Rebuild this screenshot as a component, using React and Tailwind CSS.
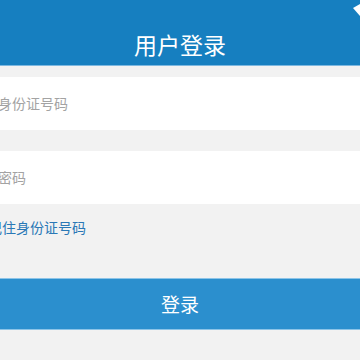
export default function App() {
  const font = { fontFamily: '"Noto Sans CJK SC", "Noto Sans", sans-serif' };
  return (
    <div className="w-[360px] h-[360px] overflow-hidden bg-[#f2f2f2] relative" style={font}>
      <div className="h-[66px] bg-[#167fc0] border-b border-[#7db8e0] flex items-end justify-center pb-[6px]">
        <span className="text-white text-[23px] leading-[30px]">用户登录</span>
      </div>
      <svg className="absolute right-0 top-[4px]" width="7" height="12" viewBox="0 0 7 12">
        <polygon points="7,0 0,4 7,12" fill="#ffffff" />
      </svg>
      <div className="h-[11px]" />
      <div className="h-[53px] bg-white flex items-center">
        <span className="ml-[-2px] text-[14px] text-[#a3a3a3]">身份证号码</span>
      </div>
      <div className="h-[21px]" />
      <div className="h-[53px] bg-white flex items-center">
        <span className="ml-[-2px] text-[14px] text-[#a3a3a3]">密码</span>
      </div>
      <div className="h-[46px] flex items-center">
        <span className="ml-[-12px] text-[14px] text-[#2a78b6]">记住身份证号码</span>
      </div>
      <div className="h-[28px]" />
      <div className="h-[52px] bg-[#2b8fce] border-y border-[#8cc4e8] flex items-center justify-center">
        <span className="text-white text-[19px]">登录</span>
      </div>
    </div>
  );
}
